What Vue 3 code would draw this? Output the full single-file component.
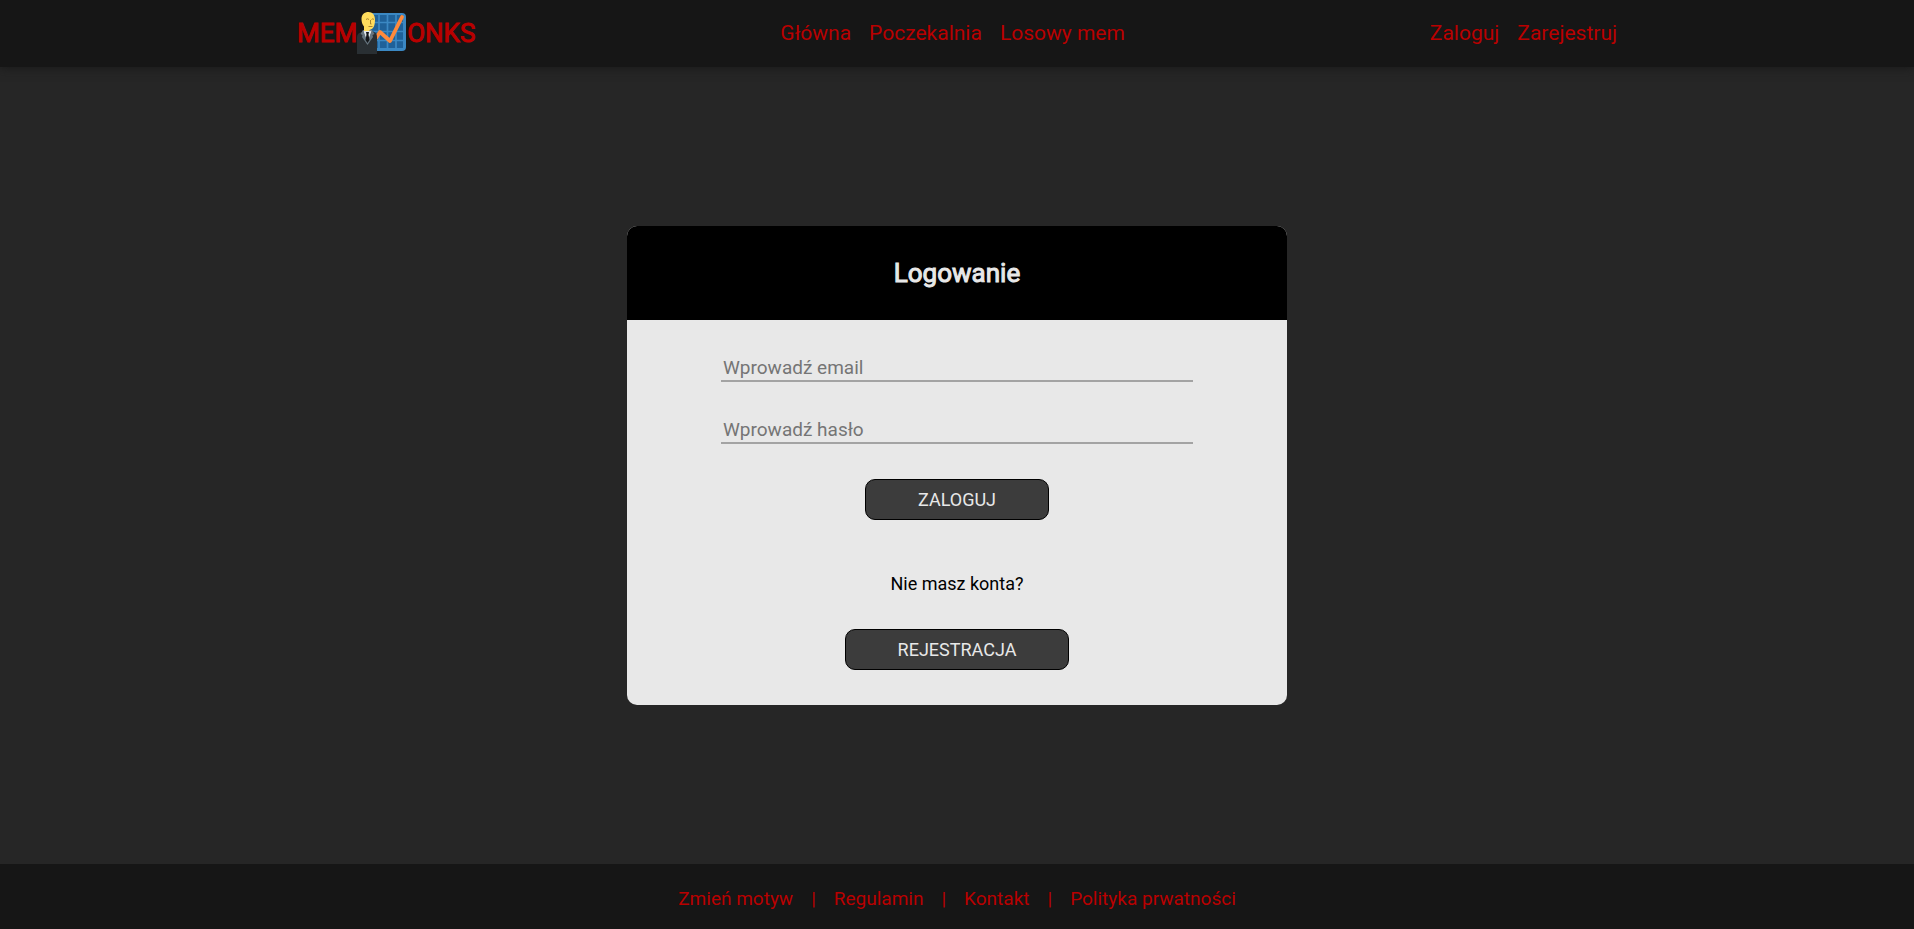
<script setup>
import { ref } from 'vue'

const email = ref('')
const password = ref('')
const mainLinks = ['Główna', 'Poczekalnia', 'Losowy mem']
const userLinks = ['Zaloguj', 'Zarejestruj']
const footerLinks = ['Zmień motyw', 'Regulamin', 'Kontakt', 'Polityka prwatności']
</script>

<template>
  <div class="page">
    <header class="topbar">
      <nav class="container">
        <a class="logo" href="#">
          <span>MEM</span>
          <svg class="mark" viewBox="0 0 50 42" aria-hidden="true">
            <rect x="11" y="1" width="38" height="38" rx="4" fill="#3b88c3" />
            <rect x="14" y="3" width="32" height="33" fill="#1f6199" />
            <path d="M22 3V36M30.500 3V36M39 3V36M14 10.500H46M14 19.500H46M14 28.500H46" stroke="#3b88c3" stroke-width="1.700" />
            <path d="M17 29L23 20L33 29L45 5" fill="none" stroke="#ff8a3c" stroke-width="3.800" stroke-linecap="round" stroke-linejoin="round" />
            <path d="M0 42V25Q0 21 5 20L8 18H14L17 20Q20 21 20 25V42Z" fill="#292f33" />
            <path d="M6 18.500L10.500 31L15 18.500Z" fill="#dfe6ea" />
            <path d="M6 18L3.500 22L5.500 23L5 25L10.500 33L16 25L15.500 23L17.500 22L15 18L10.500 30Z" fill="#66757f" />
            <path d="M9 20H12L11.500 22.500L12.500 28L10.500 31L8.500 28L9.500 22.500Z" fill="#14171a" />
            <path d="M4.500 7C4.500 2.500 7.500 0 11.500 0S18 3 18 7.500C18 12 17 17.500 13 17.500L12 19H7V14.500Q4.500 12 4.500 7Z" fill="#ffdc5d" />
            <path d="M9 7.500Q10.500 6 12 7.500M14.500 7.500Q16 6 17 7.500M13.500 8V12H14.500M11.500 14.500H15.500" fill="none" stroke="#a8852e" stroke-width="1" />
          </svg>
          <span>ONKS</span>
        </a>
        <ul class="links">
          <li v-for="l in mainLinks" :key="l"><a href="#">{{ l }}</a></li>
        </ul>
        <ul class="links">
          <li v-for="l in userLinks" :key="l"><a href="#">{{ l }}</a></li>
        </ul>
      </nav>
    </header>

    <main>
      <section class="card">
        <h1>Logowanie</h1>
        <form class="body" @submit.prevent>
          <input v-model="email" type="email" placeholder="Wprowadź email" aria-label="Wprowadź email" />
          <input v-model="password" type="password" placeholder="Wprowadź hasło" aria-label="Wprowadź hasło" />
          <button type="submit">ZALOGUJ</button>
          <p>Nie masz konta?</p>
          <button type="button">REJESTRACJA</button>
        </form>
      </section>
    </main>

    <footer>
      <template v-for="(l, i) in footerLinks" :key="l">
        <span v-if="i">|</span>
        <a href="#">{{ l }}</a>
      </template>
    </footer>
  </div>
</template>

<style>
body {
  background: #262626;
}
</style>

<style scoped>
.page {
  min-height: 100vh;
  display: flex;
  flex-direction: column;
  font-family: Roboto, "Liberation Sans", sans-serif;
  background: #262626;
}
a {
  color: #b90000;
  text-decoration: none;
}
.topbar {
  background: #161616;
  box-shadow: 0 0 10px #161616;
}
.container {
  box-sizing: border-box;
  max-width: 1320px;
  height: 67px;
  margin: 0 auto;
  padding-bottom: 2px;
  display: flex;
  justify-content: space-between;
  align-items: center;
}
.logo {
  display: flex;
  align-items: center;
  font-size: 26px;
  -webkit-text-stroke: 1px currentColor;
}
.mark {
  width: 50px;
  height: 42px;
}
.links {
  display: flex;
  gap: 18px;
  margin: 0;
  padding: 0;
  list-style: none;
  font-size: 21px;
}
main {
  flex: 1;
  display: flex;
  align-items: center;
  justify-content: center;
}
.card {
  width: 660px;
  max-width: 100%;
  border-radius: 10px;
  overflow: hidden;
  background: #e8e8e8;
}
h1 {
  margin: 0;
  padding: 30px;
  background: #000;
  color: #e8e8e8;
  font-size: 26px;
  line-height: 34px;
  font-weight: 400;
  -webkit-text-stroke: 1px currentColor;
  text-align: center;
}
.body {
  display: flex;
  flex-direction: column;
  align-items: center;
  padding: 35px 94px;
}
input {
  box-sizing: border-box;
  width: 100%;
  height: 27px;
  margin-bottom: 35px;
  padding: 1px 2px;
  border: 0;
  border-bottom: 2px solid #a3a3a3;
  background: transparent;
  font-family: inherit;
  font-size: 19px;
  color: #000;
}
input::placeholder {
  color: #757575;
}
button {
  height: 41px;
  padding: 0 52px;
  border: 1px solid #000;
  border-radius: 10px;
  background: #3c3c3c;
  color: #e8e8e8;
  font-family: inherit;
  font-size: 18px;
}
p {
  margin: 53px 0 35px;
  font-size: 18px;
  line-height: 21px;
}
footer {
  box-sizing: border-box;
  height: 65px;
  display: flex;
  align-items: center;
  justify-content: center;
  gap: 18px;
  padding-top: 4px;
  background: #161616;
  color: #b90000;
  font-size: 19px;
}
</style>
